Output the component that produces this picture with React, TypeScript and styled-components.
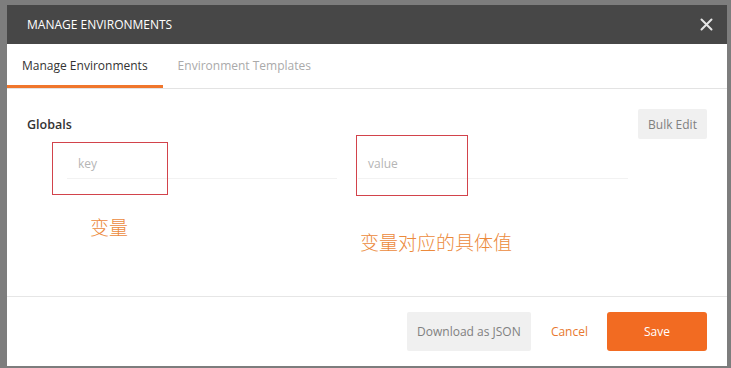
import React from "react";
import styled, { createGlobalStyle } from "styled-components";

const Global = createGlobalStyle`
  html, body { margin: 0; padding: 0; background: #7d7d7d; }
  body { font-family: "Open Sans", "Noto Sans CJK SC", sans-serif; }
  * { box-sizing: border-box; }
`;

const Page = styled.div`
  width: 731px;
  height: 368px;
  padding: 5px 4px 2px 7px;
  background: #7d7d7d;
`;

const Modal = styled.div`
  width: 720px;
  height: 361px;
  background: #fff;
  display: flex;
  flex-direction: column;
`;

const Header = styled.div`
  height: 39px;
  background: #474747;
  display: flex;
  align-items: center;
  justify-content: space-between;
  padding: 0 14px 0 20px;
`;

const Title = styled.div`
  color: #fff;
  font-size: 12px;
`;

const Close = styled.button`
  border: none;
  background: none;
  padding: 0;
  width: 13px;
  height: 13px;
  display: flex;
`;

const Tabs = styled.div`
  height: 45px;
  display: flex;
  border-bottom: 1px solid #e3e3e3;
`;

const Tab = styled.div<{ $active?: boolean }>`
  padding: 0 15px;
  display: flex;
  align-items: center;
  font-size: 12px;
  color: ${(p) => (p.$active ? "#333" : "#aaa")};
  border-bottom: 3px solid ${(p) => (p.$active ? "#f0762c" : "transparent")};
  padding-top: 2px;
`;

const Body = styled.div`
  flex: 1;
  padding: 20px 20px 0 20px;
  position: relative;
`;

const TopRow = styled.div`
  display: flex;
  justify-content: space-between;
  align-items: center;
`;

const Heading = styled.div`
  font-size: 12.5px;
  font-weight: 600;
  color: #333;
`;

const GrayButton = styled.button<{ $w: number; $h: number }>`
  width: ${(p) => p.$w}px;
  height: ${(p) => p.$h}px;
  border: none;
  background: #f0f0f0;
  color: #808080;
  font-family: "Open Sans", sans-serif;
  font-size: 12px;
  border-radius: 2px;
  padding: 0;
`;

const FieldRow = styled.div`
  display: flex;
  gap: 21px;
  padding-left: 40px;
  margin-top: 4px;
`;

const Field = styled.div<{ $pad: number }>`
  width: 270px;
  height: 36px;
  border-bottom: 1px solid #f2f2f2;
  display: flex;
  align-items: center;
  font-size: 12px;
  color: #b5b5b5;
  padding-top: 6px;
  padding-left: ${(p) => p.$pad}px;
`;

const Mark = styled.div`
  position: absolute;
  border: 1px solid #d2434b;
`;

const NoteRow = styled.div`
  display: flex;
  padding-left: 63px;
`;

const Note = styled.div<{ $w: number; $mt: number }>`
  width: ${(p) => p.$w}px;
  margin-top: ${(p) => p.$mt}px;
  font-family: "Noto Sans CJK SC", sans-serif;
  font-size: 19px;
  line-height: 20px;
  color: #ec8a3c;
  font-weight: 300;
`;

const Footer = styled.div`
  height: 70px;
  border-top: 1px solid #e6e6e6;
  display: flex;
  align-items: center;
  justify-content: flex-end;
  padding: 0 20px;
`;

const TextButton = styled.button`
  border: none;
  background: none;
  color: #e8782f;
  font-family: "Open Sans", sans-serif;
  font-size: 12px;
  padding: 0 19px 0 20px;
  height: 39px;
`;

const SaveButton = styled.button`
  width: 100px;
  height: 39px;
  border: none;
  border-radius: 3px;
  background: #f26b22;
  color: #fff;
  font-family: "Open Sans", sans-serif;
  font-size: 12px;
  padding: 0;
`;

export default function App() {
  return (
    <>
      <Global />
      <Page>
        <Modal>
          <Header>
            <Title>MANAGE ENVIRONMENTS</Title>
            <Close aria-label="close">
              <svg width="13" height="13" viewBox="0 0 13 13">
                <path d="M1.5 1.5 L11.5 11.5 M11.5 1.5 L1.5 11.5" stroke="#e6e6e6" strokeWidth="2" strokeLinecap="round" />
              </svg>
            </Close>
          </Header>
          <Tabs>
            <Tab $active>Manage Environments</Tab>
            <Tab>Environment Templates</Tab>
          </Tabs>
          <Body>
            <TopRow>
              <Heading>Globals</Heading>
              <GrayButton $w={69} $h={30}>Bulk Edit</GrayButton>
            </TopRow>
            <FieldRow>
              <Field $pad={11}>key</Field>
              <Field $pad={10}>value</Field>
            </FieldRow>
            <NoteRow>
              <Note $w={270} $mt={38}>变量</Note>
              <Note $w={200} $mt={53}>变量对应的具体值</Note>
            </NoteRow>
            <Mark style={{ left: 45, top: 53, width: 116, height: 53 }} />
            <Mark style={{ left: 349, top: 46, width: 112, height: 61 }} />
          </Body>
          <Footer>
            <GrayButton $w={124} $h={39}>Download as JSON</GrayButton>
            <TextButton>Cancel</TextButton>
            <SaveButton>Save</SaveButton>
          </Footer>
        </Modal>
      </Page>
    </>
  );
}
